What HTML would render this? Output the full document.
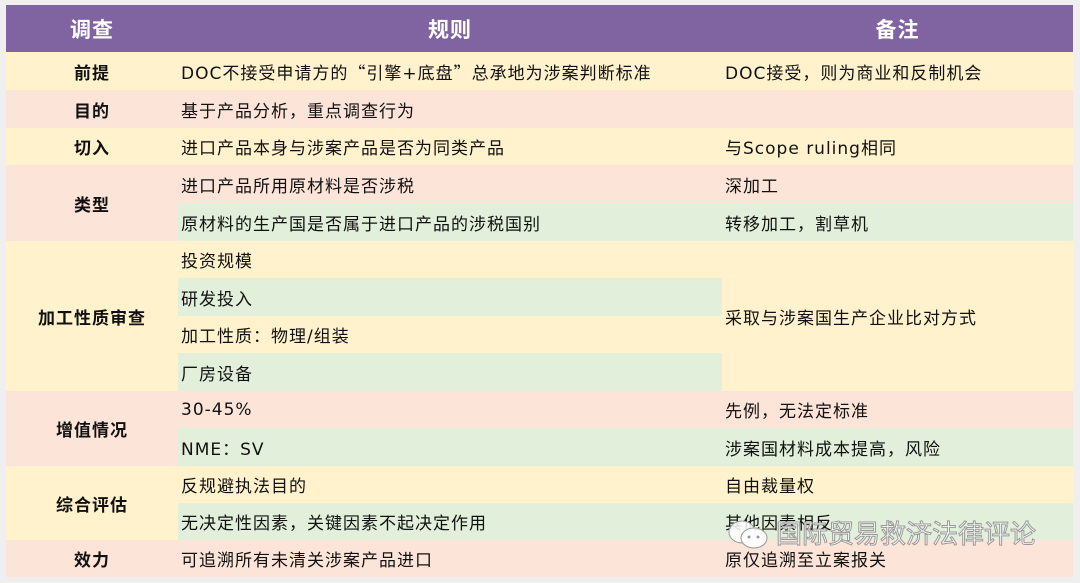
<!DOCTYPE html>
<html><head><meta charset="utf-8"><style>
html,body{margin:0;width:1080px;height:583px;overflow:hidden;}
body{background:#efefef;position:relative;font-family:"DejaVu Sans","Noto Sans CJK SC",sans-serif;}
.c{position:absolute;box-sizing:border-box;display:flex;align-items:center;font-size:17px;letter-spacing:1px;color:#111;white-space:nowrap;}
.h{background:#8064a2;color:#fff;font-weight:bold;font-size:21px;justify-content:center;}
.k{font-weight:bold;justify-content:center;}
.t{padding-left:3px;}
.y{background:#fff2cc}.p{background:#fde4d8}.g{background:#e2efda}
.q{font-family:"Noto Sans CJK SC",sans-serif;}
.wm{position:absolute;left:776px;top:514px;font-size:26px;white-space:nowrap;color:rgba(255,255,255,.85);-webkit-text-stroke:1px #999;font-family:"Noto Sans CJK SC",sans-serif;letter-spacing:0px;}
</style></head><body>
<div style="position:absolute;left:6px;top:5px;width:1067px;height:572px;background:#fff"></div>
<div class="c h" style="left:6px;top:5px;width:172px;height:47px">调查</div>
<div class="c h" style="left:178px;top:5px;width:544px;height:47px">规则</div>
<div class="c h" style="left:722px;top:5px;width:351px;height:47px">备注</div>

<div class="c k y" style="left:6px;top:52px;width:172px;height:38px">前提</div>
<div class="c k p" style="left:6px;top:90px;width:172px;height:38px">目的</div>
<div class="c k y" style="left:6px;top:128px;width:172px;height:37px">切入</div>
<div class="c k p" style="left:6px;top:165px;width:172px;height:76px">类型</div>
<div class="c k y" style="left:6px;top:241px;width:172px;height:150px">加工性质审查</div>
<div class="c k p" style="left:6px;top:391px;width:172px;height:75px">增值情况</div>
<div class="c k y" style="left:6px;top:466px;width:172px;height:74px">综合评估</div>
<div class="c k p" style="left:6px;top:540px;width:172px;height:37px">效力</div>

<div class="c t y" style="left:178px;top:52px;width:544px;height:38px">DOC不接受申请方的<span class="q">“</span>引擎+底盘<span class="q">”</span>总承地为涉案判断标准</div>
<div class="c t p" style="left:178px;top:90px;width:544px;height:38px">基于产品分析，重点调查行为</div>
<div class="c t y" style="left:178px;top:128px;width:544px;height:37px">进口产品本身与涉案产品是否为同类产品</div>
<div class="c t p" style="left:178px;top:165px;width:544px;height:38px">进口产品所用原材料是否涉税</div>
<div class="c t g" style="left:178px;top:203px;width:544px;height:38px">原材料的生产国是否属于进口产品的涉税国别</div>
<div class="c t y" style="left:178px;top:241px;width:544px;height:37px">投资规模</div>
<div class="c t g" style="left:178px;top:278px;width:544px;height:38px">研发投入</div>
<div class="c t y" style="left:178px;top:316px;width:544px;height:37px">加工性质：物理/组装</div>
<div class="c t g" style="left:178px;top:353px;width:544px;height:38px">厂房设备</div>
<div class="c t p" style="left:178px;top:391px;width:544px;height:37px">30-45%</div>
<div class="c t g" style="left:178px;top:428px;width:544px;height:38px">NME：SV</div>
<div class="c t y" style="left:178px;top:466px;width:544px;height:37px">反规避执法目的</div>
<div class="c t g" style="left:178px;top:503px;width:544px;height:37px">无决定性因素，关键因素不起决定作用</div>
<div class="c t p" style="left:178px;top:540px;width:544px;height:37px">可追溯所有未清关涉案产品进口</div>

<div class="c t y" style="left:722px;top:52px;width:351px;height:38px">DOC接受，则为商业和反制机会</div>
<div class="c t p" style="left:722px;top:90px;width:351px;height:38px"></div>
<div class="c t y" style="left:722px;top:128px;width:351px;height:37px">与Scope ruling相同</div>
<div class="c t p" style="left:722px;top:165px;width:351px;height:38px">深加工</div>
<div class="c t g" style="left:722px;top:203px;width:351px;height:38px">转移加工，割草机</div>
<div class="c t y" style="left:722px;top:241px;width:351px;height:150px">采取与涉案国生产企业比对方式</div>
<div class="c t p" style="left:722px;top:391px;width:351px;height:37px">先例，无法定标准</div>
<div class="c t g" style="left:722px;top:428px;width:351px;height:38px">涉案国材料成本提高，风险</div>
<div class="c t y" style="left:722px;top:466px;width:351px;height:37px">自由裁量权</div>
<div class="c t g" style="left:722px;top:503px;width:351px;height:37px">其他因素相反</div>
<div class="c t p" style="left:722px;top:540px;width:351px;height:37px">原仅追溯至立案报关</div>

<svg style="position:absolute;left:727px;top:519px" width="44" height="32" viewBox="0 0 44 32">
<ellipse cx="15" cy="13" rx="13" ry="11" fill="rgba(255,255,255,.85)" stroke="#999"/>
<ellipse cx="27" cy="19" rx="13" ry="10" fill="rgba(255,255,255,.9)" stroke="#999"/>
<circle cx="22" cy="18" r="1.5" fill="#999"/><circle cx="31" cy="18" r="1.5" fill="#999"/>
</svg>
<div class="wm">国际贸易救济法律评论</div>
</body></html>
